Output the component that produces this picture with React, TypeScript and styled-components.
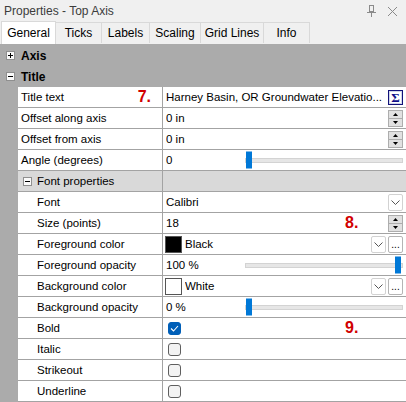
import React from 'react';
import styled, { createGlobalStyle } from 'styled-components';

const GlobalStyle = createGlobalStyle`
  * { box-sizing: border-box; }
  html, body { margin: 0; padding: 0; }
  body {
    font-family: "Liberation Sans", Arial, sans-serif;
    font-size: 11.5px;
    color: #000;
  }
`;

const LINE = '#a3a3a3';

const Window = styled.div`
  width: 406px;
  height: 402px;
  overflow: hidden;
  display: flex;
  flex-direction: column;
  background: #f0f0f0;
`;

const TitleBar = styled.div`
  height: 22px;
  flex: none;
  display: flex;
  align-items: center;
  padding: 0 4px 0 4px;
  color: #3c3c3c;
  font-size: 12px;
`;

const TitleText = styled.span`
  flex: 1;
`;

const TitleIcon = styled.span`
  width: 20px;
  height: 22px;
  display: flex;
  align-items: center;
  justify-content: center;
`;

const TabStrip = styled.div`
  height: 22px;
  flex: none;
  display: flex;
  align-items: flex-end;
  padding-left: 1px;
`;

const Tab = styled.div<{ $active?: boolean; $w: number }>`
  width: ${(p) => p.$w}px;
  height: ${(p) => (p.$active ? 23 : 21)}px;
  margin-bottom: ${(p) => (p.$active ? 0 : 1)}px;
  display: flex;
  align-items: center;
  justify-content: center;
  font-size: 12px;
  background: ${(p) => (p.$active ? '#fff' : '#f0f0f0')};
  border: 1px solid #d9d9d9;
  border-bottom: none;
  margin-right: -1px;
  position: relative;
  z-index: ${(p) => (p.$active ? 1 : 0)};
`;

const Grid = styled.div`
  flex: 1;
  background: #ababab;
  display: flex;
  flex-direction: column;
  padding-top: 1px;
`;

const GroupRow = styled.div`
  height: 21px;
  flex: none;
  display: flex;
  align-items: center;
  gap: 6px;
  padding-left: 6px;
  font-weight: bold;
  font-size: 12px;
`;

const Row = styled.div`
  height: 21px;
  flex: none;
  display: flex;
`;

const Gutter = styled.div`
  width: 18px;
  flex: none;
`;

const LabelCell = styled.div<{ $sub?: boolean }>`
  width: 145px;
  flex: none;
  position: relative;
  display: flex;
  align-items: center;
  padding-left: ${(p) => (p.$sub ? 19 : 3)}px;
  background: #fff;
  border-right: 1px solid ${LINE};
  border-bottom: 1px solid ${LINE};
  white-space: nowrap;
`;

const ValueCell = styled.div`
  flex: 1;
  min-width: 0;
  position: relative;
  display: flex;
  align-items: center;
  gap: 2px;
  padding: 0 3px 0 3px;
  background: #fff;
  border-bottom: 1px solid ${LINE};
`;

const SubHeadLabel = styled(LabelCell)`
  background: #d9d9d9;
  padding-left: 5px;
  gap: 5px;
`;

const SubHeadValue = styled(ValueCell)`
  background: #d9d9d9;
`;

const ValueText = styled.span`
  flex: 1;
  min-width: 0;
  overflow: hidden;
  white-space: nowrap;
`;

const FixedText = styled.span`
  width: 77px;
  flex: none;
  white-space: nowrap;
`;

const Annot = styled.span<{ $left?: number; $right?: number }>`
  position: absolute;
  top: 50%;
  transform: translateY(-50%);
  ${(p) => (p.$left !== undefined ? `left: ${p.$left}px;` : '')}
  ${(p) => (p.$right !== undefined ? `right: ${p.$right}px;` : '')}
  color: #d10000;
  font-weight: bold;
  font-size: 16px;
  line-height: 1;
`;

const SigmaButton = styled.span`
  width: 15px;
  height: 15px;
  flex: none;
  display: flex;
  align-items: center;
  justify-content: center;
  border: 1px solid #12127a;
  box-shadow: inset 0 0 0 1px #cfd6ea;
  color: #10108a;
  font-weight: bold;
  font-size: 13px;
  line-height: 1;
  font-family: "Liberation Serif", serif;
`;

const Spinner = styled.span`
  width: 15px;
  height: 17px;
  flex: none;
  display: flex;
  flex-direction: column;
`;

const SpinHalf = styled.span`
  flex: 1;
  display: flex;
  align-items: center;
  justify-content: center;
  background: #e1e1e1;
  border: 1px solid #adadad;
  & + & {
    margin-top: -1px;
  }
`;

const SmallButton = styled.span<{ $dots?: boolean }>`
  width: 15px;
  height: 17px;
  flex: none;
  display: flex;
  align-items: ${(p) => (p.$dots ? 'flex-end' : 'center')};
  justify-content: center;
  border: 1px solid ${(p) => (p.$dots ? '#b4b4b4' : '#d2d2d2')};
  border-radius: 2px;
  background: #fff;
  font-size: 10px;
  line-height: 1;
  padding-bottom: ${(p) => (p.$dots ? 2 : 0)}px;
`;

const Swatch = styled.span<{ $color: string }>`
  width: 17px;
  height: 17px;
  flex: none;
  margin-left: -1px;
  margin-right: 1px;
  background: ${(p) => p.$color};
  border: 1px solid #555;
`;

const SliderTrack = styled.span`
  flex: 1;
  height: 5px;
  position: relative;
  background: #e6e6e6;
  border: 1px solid #d3d3d3;
`;

const SliderThumb = styled.span`
  position: absolute;
  top: 50%;
  width: 6px;
  height: 17px;
  transform: translateY(-50%);
  background: #0078d7;
`;

const Check = styled.span<{ $on?: boolean }>`
  width: 13px;
  height: 13px;
  margin-left: 2px;
  display: flex;
  align-items: center;
  justify-content: center;
  border-radius: 3px;
  border: 1px solid ${(p) => (p.$on ? '#005fb8' : '#5f5f5f')};
  background: ${(p) => (p.$on ? '#005fb8' : '#f3f3f3')};
`;

const ExpandIcon = ({ open }: { open?: boolean }) => (
  <svg width="9" height="9" viewBox="0 0 9 9" style={{ flex: 'none' }}>
    <rect x="0.5" y="0.5" width="8" height="8" fill="#fafafa" stroke="#8f8f8f" />
    <line x1="2" y1="4.5" x2="7" y2="4.5" stroke="#000" />
    {!open && <line x1="4.5" y1="2" x2="4.5" y2="7" stroke="#000" />}
  </svg>
);

const Chevron = () => (
  <svg width="9" height="5" viewBox="0 0 9 5">
    <polyline points="0.5,0.5 4.5,4.5 8.5,0.5" fill="none" stroke="#555" strokeWidth="1" />
  </svg>
);

const Arrow = ({ up }: { up?: boolean }) => (
  <svg width="5" height="3" viewBox="0 0 5 3">
    <polygon points={up ? '0,3 5,3 2.5,0' : '0,0 5,0 2.5,3'} fill="#000" />
  </svg>
);

const SpinBox = () => (
  <Spinner>
    <SpinHalf><Arrow up /></SpinHalf>
    <SpinHalf><Arrow /></SpinHalf>
  </Spinner>
);

const Slider = ({ value }: { value: number }) => (
  <SliderTrack>
    <SliderThumb style={{ left: `calc(${value}% - ${value * 0.07}px)` }} />
  </SliderTrack>
);

const CheckBox = ({ on }: { on?: boolean }) => (
  <Check $on={on}>
    {on && (
      <svg width="9" height="7" viewBox="0 0 9 7">
        <polyline points="1,3.5 3.5,6 8,1" fill="none" stroke="#fff" strokeWidth="1.1" />
      </svg>
    )}
  </Check>
);

const PinIcon = () => (
  <svg width="10" height="12" viewBox="0 0 10 12">
    <g stroke="#8a8a8a" fill="none" strokeWidth="1">
      <rect x="2.5" y="0.5" width="4" height="6" />
      <line x1="0" y1="7.5" x2="9" y2="7.5" />
      <line x1="4.5" y1="8" x2="4.5" y2="12" />
    </g>
  </svg>
);

const CloseIcon = () => (
  <svg width="9" height="9" viewBox="0 0 9 9">
    <g stroke="#8a8a8a" strokeWidth="1">
      <line x1="0" y1="0" x2="9" y2="9" />
      <line x1="9" y1="0" x2="0" y2="9" />
    </g>
  </svg>
);

const tabs = [
  { name: 'General', w: 55 },
  { name: 'Ticks', w: 47 },
  { name: 'Labels', w: 49 },
  { name: 'Scaling', w: 52 },
  { name: 'Grid Lines', w: 64 },
  { name: 'Info', w: 47 },
];

type PropRowProps = {
  label: string;
  sub?: boolean;
  annot?: string;
  children?: React.ReactNode;
};

const PropRow = ({ label, sub, annot, children }: PropRowProps) => (
  <Row>
    <Gutter />
    <LabelCell $sub={sub}>
      {label}
      {annot && <Annot $right={11}>{annot}</Annot>}
    </LabelCell>
    <ValueCell>{children}</ValueCell>
  </Row>
);

export default function App() {
  return (
    <>
      <GlobalStyle />
      <Window>
        <TitleBar>
          <TitleText>Properties - Top Axis</TitleText>
          <TitleIcon><PinIcon /></TitleIcon>
          <TitleIcon><CloseIcon /></TitleIcon>
        </TitleBar>
        <TabStrip>
          {tabs.map((t, i) => (
            <Tab key={t.name} $w={t.w} $active={i === 0}>
              {t.name}
            </Tab>
          ))}
        </TabStrip>
        <Grid>
          <GroupRow>
            <ExpandIcon />
            Axis
          </GroupRow>
          <GroupRow>
            <ExpandIcon open />
            Title
          </GroupRow>
          <PropRow label="Title text" annot="7.">
            <ValueText>Harney Basin, OR Groundwater Elevatio...</ValueText>
            <SigmaButton>Σ</SigmaButton>
          </PropRow>
          <PropRow label="Offset along axis">
            <ValueText>0 in</ValueText>
            <SpinBox />
          </PropRow>
          <PropRow label="Offset from axis">
            <ValueText>0 in</ValueText>
            <SpinBox />
          </PropRow>
          <PropRow label="Angle (degrees)">
            <FixedText>0</FixedText>
            <Slider value={0} />
          </PropRow>
          <Row>
            <Gutter />
            <SubHeadLabel>
              <ExpandIcon open />
              Font properties
            </SubHeadLabel>
            <SubHeadValue />
          </Row>
          <PropRow label="Font" sub>
            <ValueText>Calibri</ValueText>
            <SmallButton><Chevron /></SmallButton>
          </PropRow>
          <PropRow label="Size (points)" sub>
            <ValueText>18</ValueText>
            <Annot $left={182}>8.</Annot>
            <SpinBox />
          </PropRow>
          <PropRow label="Foreground color" sub>
            <Swatch $color="#000" />
            <ValueText>Black</ValueText>
            <SmallButton><Chevron /></SmallButton>
            <SmallButton $dots>...</SmallButton>
          </PropRow>
          <PropRow label="Foreground opacity" sub>
            <FixedText>100 %</FixedText>
            <Slider value={100} />
          </PropRow>
          <PropRow label="Background color" sub>
            <Swatch $color="#fff" />
            <ValueText>White</ValueText>
            <SmallButton><Chevron /></SmallButton>
            <SmallButton $dots>...</SmallButton>
          </PropRow>
          <PropRow label="Background opacity" sub>
            <FixedText>0 %</FixedText>
            <Slider value={0} />
          </PropRow>
          <PropRow label="Bold" sub>
            <CheckBox on />
            <Annot $left={182}>9.</Annot>
          </PropRow>
          <PropRow label="Italic" sub>
            <CheckBox />
          </PropRow>
          <PropRow label="Strikeout" sub>
            <CheckBox />
          </PropRow>
          <PropRow label="Underline" sub>
            <CheckBox />
          </PropRow>
        </Grid>
      </Window>
    </>
  );
}
